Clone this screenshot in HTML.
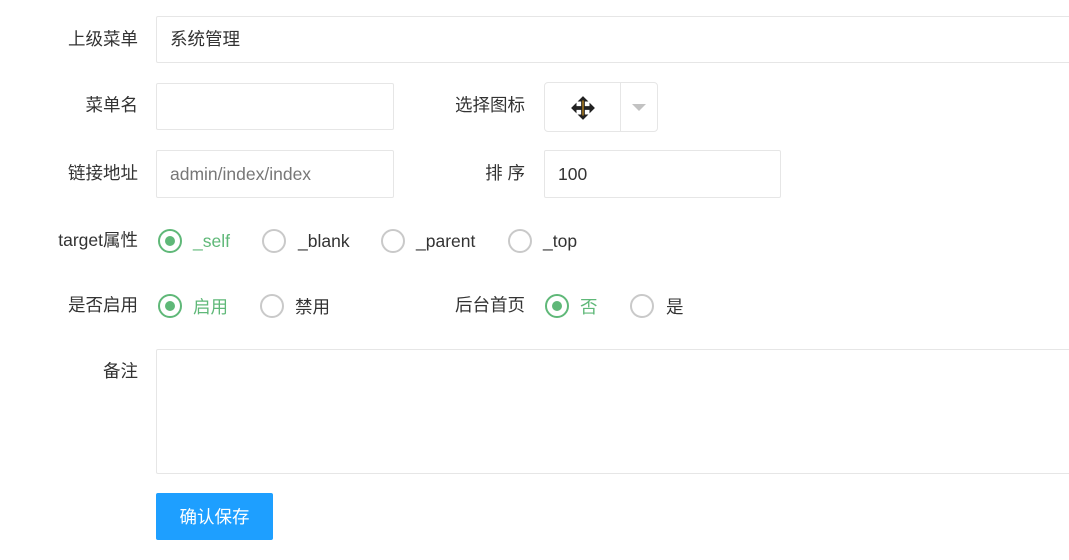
<!DOCTYPE html>
<html><head><meta charset="utf-8"><style>
*{box-sizing:border-box;margin:0;padding:0}
body{width:1069px;height:560px;background:#fff;font-family:"Liberation Sans","Noto Sans CJK SC",sans-serif;font-size:17.5px;color:#333;position:relative;overflow:hidden}
.a{position:absolute}
.lab{position:absolute;text-align:right;color:#333;font-size:17.5px;line-height:20px;white-space:nowrap}
.inp{position:absolute;border:1px solid #e6e6e6;border-radius:2px;padding-left:13px;display:flex;align-items:center;font-size:17.5px;color:#333}
.r{position:absolute;width:24px;height:24px;border:2px solid #c9c9c9;border-radius:50%}
.r.on{border-color:#5fb878}
.r.on::after{content:"";position:absolute;left:5px;top:5px;width:10px;height:10px;border-radius:50%;background:#5fb878}
.t{position:absolute;font-size:17.5px;line-height:20px;color:#333;white-space:nowrap}
.t.on{color:#5fb878}
</style></head><body>
<div class="lab" style="right:931px;top:29px">上级菜单</div>
<div class="inp" style="left:156px;top:16px;width:920px;height:47px;padding-bottom:2px">系统管理</div>

<div class="lab" style="right:931px;top:95px">菜单名</div>
<div class="inp" style="left:156px;top:83px;width:238px;height:47px"></div>
<div class="lab" style="right:544px;top:95px">选择图标</div>
<div class="inp" style="left:544px;top:82px;width:114px;height:50px;padding:0;border-radius:4px">
 <div class="a" style="left:75px;top:0;width:1px;height:48px;background:#e6e6e6"></div>
 <svg class="a" style="left:25px;top:12px" width="26" height="26" viewBox="0 0 24 24"><path d="M12 1l5 5h-3.3v4.3H18V7l5 5-5 5v-3.3h-4.3V18H17l-5 5-5-5h3.3v-4.3H6V17l-5-5 5-5v3.3h4.3V6H7z" fill="#222"/><path d="M12 5v14" stroke="#e0a020" stroke-width="1"/></svg>
 <div class="a" style="left:87px;top:21px;width:0;height:0;border-left:7px solid transparent;border-right:7px solid transparent;border-top:7px solid #c2c2c2"></div>
</div>

<div class="lab" style="right:931px;top:163px">链接地址</div>
<div class="inp" style="left:156px;top:150px;width:238px;height:48px;color:#777">admin/index/index</div>
<div class="lab" style="right:544px;top:163px">排 序</div>
<div class="inp" style="left:544px;top:150px;width:237px;height:48px">100</div>

<div class="lab" style="right:931px;top:230px">target属性</div>
<div class="r on" style="left:158px;top:229px"></div><div class="t on" style="left:193px;top:231px">_self</div>
<div class="r" style="left:262px;top:229px"></div><div class="t" style="left:298px;top:231px">_blank</div>
<div class="r" style="left:381px;top:229px"></div><div class="t" style="left:416px;top:231px">_parent</div>
<div class="r" style="left:508px;top:229px"></div><div class="t" style="left:543px;top:231px">_top</div>

<div class="lab" style="right:931px;top:295px">是否启用</div>
<div class="r on" style="left:158px;top:294px"></div><div class="t on" style="left:193px;top:297px">启用</div>
<div class="r" style="left:260px;top:294px"></div><div class="t" style="left:295px;top:297px">禁用</div>
<div class="lab" style="right:544px;top:295px">后台首页</div>
<div class="r on" style="left:545px;top:294px"></div><div class="t on" style="left:580px;top:297px">否</div>
<div class="r" style="left:630px;top:294px"></div><div class="t" style="left:666px;top:297px">是</div>

<div class="lab" style="right:931px;top:361px">备注</div>
<div class="inp" style="left:156px;top:349px;width:920px;height:125px"></div>

<div class="a" style="left:156px;top:493px;width:117px;height:47px;background:#1e9fff;border-radius:2px;color:#fff;font-size:17.5px;display:flex;align-items:center;justify-content:center">确认保存</div>
</body></html>
